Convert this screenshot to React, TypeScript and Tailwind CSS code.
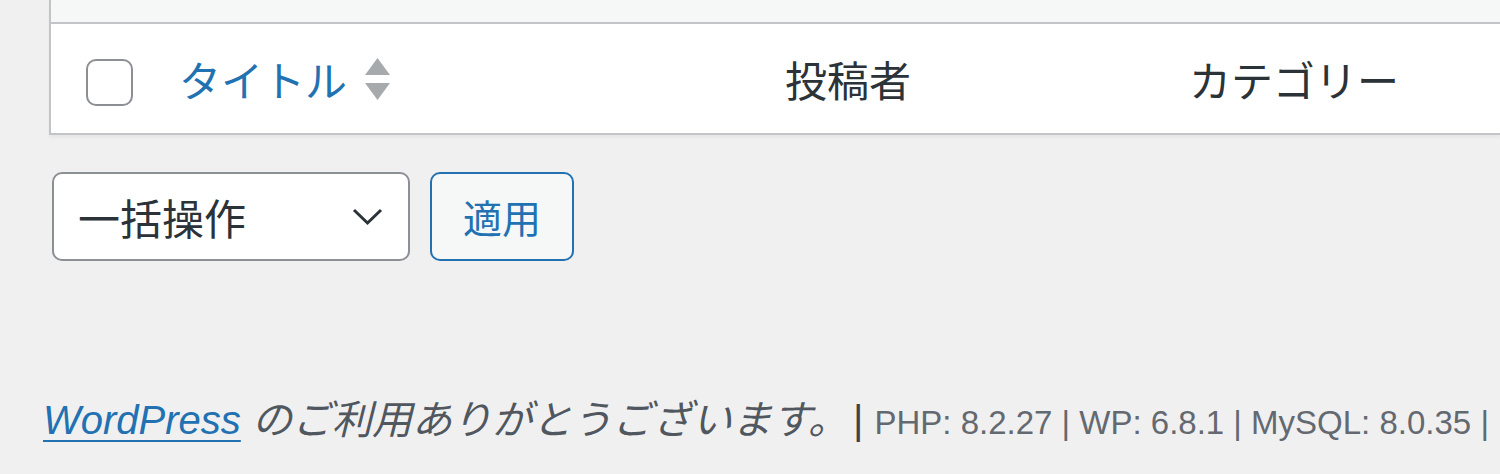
const jp = "font-['Noto_Sans_CJK_JP',sans-serif]";

const SortIndicator = () => (
  <svg width="25" height="42" viewBox="0 0 25 42" className="ml-[18px] shrink-0">
    <polygon points="12.5,0 25,17 0,17" fill="#a7aaad" />
    <polygon points="0,25 25,25 12.5,42" fill="#a7aaad" />
  </svg>
);

const Chevron = () => (
  <svg width="31" height="20" viewBox="0 0 31 20" className="shrink-0">
    <polyline points="2,3 15.5,16 29,3" fill="none" stroke="#2c3338" strokeWidth="3" />
  </svg>
);

export default function App() {
  return (
    <div className="h-[474px] w-full overflow-hidden bg-[#f0f0f1] font-['Liberation_Sans','Noto_Sans_CJK_JP',sans-serif]">
      {/* posts table, last row + footer row */}
      <div className="ml-[49px] border-b-2 border-l-2 border-[#c3c4c7] bg-white shadow-[0_3px_3px_rgba(0,0,0,0.04)]">
        <div className="h-[24px] border-b-2 border-[#c3c4c7] bg-[#f6f7f7]" />
        <div className={`flex h-[109px] items-center text-[42px] leading-none text-[#2c3338] ${jp}`}>
          <div className="w-[128px] shrink-0 pl-[35px] pt-[8px]">
            <div className="h-[47px] w-[47px] rounded-[10px] border-2 border-[#8c8f94] bg-white" />
          </div>
          <div className="flex w-[606px] shrink-0 items-center">
            <a className="text-[#2271b1]">タイトル</a>
            <SortIndicator />
          </div>
          <div className="w-[404px] shrink-0">投稿者</div>
          <div className="flex-1 whitespace-nowrap">カテゴリー</div>
        </div>
      </div>

      {/* bulk actions */}
      <div className="mt-[37px] ml-[52px] flex gap-[20px]">
        <div className="flex h-[89px] w-[358px] items-center justify-between rounded-[10px] border-2 border-[#8c8f94] bg-white pl-[24px] pr-[25px]">
          <span className={`text-[42px] leading-none text-[#2c3338] ${jp}`}>一括操作</span>
          <Chevron />
        </div>
        <button className="flex h-[89px] w-[144px] items-center justify-center rounded-[10px] border-2 border-[#2271b1] bg-[#f6f7f7]">
          <span className={`text-[39px] leading-none text-[#2271b1] ${jp}`}>適用</span>
        </button>
      </div>

      {/* admin footer */}
      <div className="mt-[136px] flex items-baseline whitespace-nowrap pl-[43px] leading-[46px]">
        <span className="text-[40px] italic text-[#50575e]">
          <a className="text-[#2271b1] underline decoration-2 underline-offset-[6px]">WordPress</a> のご利用ありがとうございます。
        </span>
        <span className="ml-[5px] text-[40px] text-[#3c434a]">|</span>
        <span className="text-[40px]">&nbsp;</span>
        <span className="text-[33px] text-[#646970]">PHP: 8.2.27 | WP: 6.8.1 | MySQL: 8.0.35 |</span>
      </div>
    </div>
  );
}
